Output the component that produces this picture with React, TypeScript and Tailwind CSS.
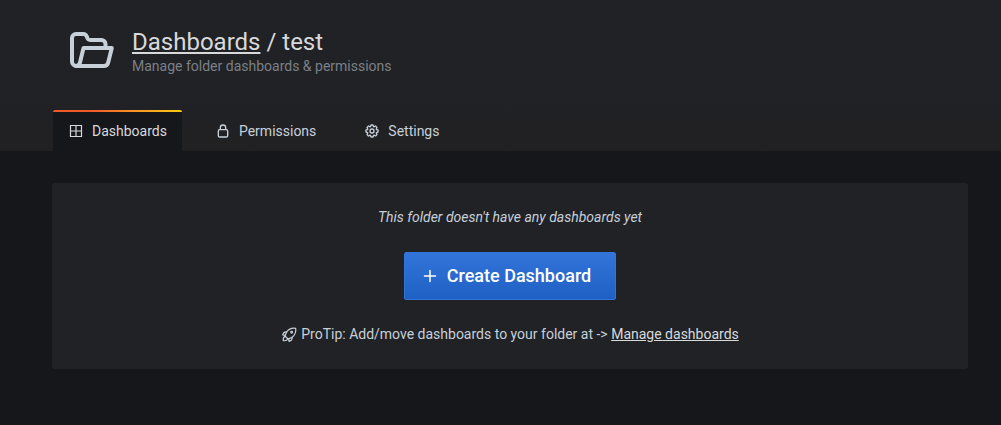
import type { ReactNode } from 'react';

function FolderOpenIcon() {
  return (
    <svg className="mb-1" width="44" height="36" viewBox="0 0 44 36" fill="none" stroke="currentColor" strokeWidth="4" strokeLinejoin="round" aria-hidden="true">
      <path d="M8 34H6.500a4.500 4.500 0 0 1-4.500-4.500V6a4 4 0 0 1 4-4h7a4 4 0 0 1 3.800 2.500l.8 2a2.500 2.500 0 0 0 2.300 1.500H31.500a4 4 0 0 1 4 4v4" />
      <path d="M13.500 16H41.800l-3.600 14.500a4.500 4.500 0 0 1-4.400 3.500H6a4.500 4.500 0 0 0 4-3.500Z" />
    </svg>
  );
}

function GridIcon() {
  return (
    <svg width="16" height="16" viewBox="0 0 16 16" fill="none" stroke="currentColor" strokeWidth="1.200" aria-hidden="true">
      <path d="M2.500 2.500h11v11h-11zM8 2.500v11M2.500 8h11" />
    </svg>
  );
}

function LockIcon() {
  return (
    <svg width="16" height="16" viewBox="0 0 24 24" fill="currentColor" aria-hidden="true">
      <path d="M17,9V7A5,5,0,0,0,7,7V9a3,3,0,0,0-3,3v7a3,3,0,0,0,3,3H17a3,3,0,0,0,3-3V12A3,3,0,0,0,17,9ZM9,7a3,3,0,0,1,6,0V9H9Zm9,12a1,1,0,0,1-1,1H7a1,1,0,0,1-1-1V12a1,1,0,0,1,1-1H17a1,1,0,0,1,1,1Z" />
    </svg>
  );
}

function CogIcon() {
  return (
    <svg width="16" height="16" viewBox="0 0 24 24" fill="currentColor" aria-hidden="true">
      <path d="M21.32,9.55l-1.89-.63.89-1.78A1,1,0,0,0,20.13,6L18,3.87a1,1,0,0,0-1.150-.19l-1.780.89-.63-1.890A1,1,0,0,0,13.500,2h-3a1,1,0,0,0-.95.68L8.920,4.570,7.140,3.680A1,1,0,0,0,6,3.870L3.870,6a1,1,0,0,0-.19,1.150l.89,1.780-1.890.63A1,1,0,0,0,2,10.500v3a1,1,0,0,0,.68.95l1.890.63-.89,1.780A1,1,0,0,0,3.870,18L6,20.130a1,1,0,0,0,1.150.19l1.780-.89.63,1.890a1,1,0,0,0,.95.68h3a1,1,0,0,0,.95-.68l.63-1.890,1.780.89A1,1,0,0,0,18,20.130L20.130,18a1,1,0,0,0,.19-1.150l-.89-1.780,1.890-.63A1,1,0,0,0,22,13.500v-3A1,1,0,0,0,21.320,9.550ZM20,12.780l-1.200.4A2,2,0,0,0,17.640,16l.57,1.140-1.100,1.100L16,17.640a2,2,0,0,0-2.790,1.160l-.4,1.200H11.220l-.4-1.200A2,2,0,0,0,8,17.640l-1.140.57-1.100-1.100L6.360,16A2,2,0,0,0,5.200,13.180L4,12.780V11.220l1.200-.4A2,2,0,0,0,6.360,8L5.790,6.890l1.100-1.100L8,6.360A2,2,0,0,0,10.820,5.200l.4-1.200h1.560l.4,1.200A2,2,0,0,0,16,6.360l1.140-.57,1.100,1.100L17.640,8a2,2,0,0,0,1.160,2.790l1.200.4ZM12,8a4,4,0,1,0,4,4A4,4,0,0,0,12,8Zm0,6a2,2,0,1,1,2-2A2,2,0,0,1,12,14Z" />
    </svg>
  );
}

function PlusIcon() {
  return (
    <svg width="18" height="18" viewBox="0 0 18 18" fill="none" stroke="currentColor" strokeWidth="1.500" strokeLinecap="round" aria-hidden="true">
      <path d="M9 3.500v11M3.500 9h11" />
    </svg>
  );
}

function RocketIcon() {
  return (
    <svg width="16" height="16" viewBox="0 0 24 24" fill="none" stroke="currentColor" strokeWidth="1.800" strokeLinejoin="round" strokeLinecap="round" aria-hidden="true">
      <path d="M22 2c-6-.8-10.500 1.200-13.500 5.500L6 13.500l4.500 4.500 6-2.500C20.800 12.500 22.800 8 22 2Z" />
      <path d="M8.500 7.500C5.500 7 3.500 8.700 2.500 12l4 .5M16.500 15.500c.5 3-1.200 5-4.500 6l-.5-3.700" />
      <path d="M6 14c-2.500 1-3 3-2.500 6.500 3.500.5 5.500 0 6.500-2.500" />
      <circle cx="16" cy="8" r="1.300" />
    </svg>
  );
}

function Tab({ icon, label, active = false }: { icon: ReactNode; label: string; active?: boolean }) {
  return (
    <li className={active ? 'overflow-hidden rounded-t-xs bg-[#16171b]' : ''}>
      <div className={active ? 'h-0.5 bg-linear-to-r from-[#f05a28] from-30% to-[#fbca0a] to-99%' : 'h-0.5'} />
      <a
        href="#"
        aria-current={active ? 'page' : undefined}
        className={`flex items-center gap-2 px-[15px] pt-[9px] pb-[9px] text-sm leading-[21px] ${active ? 'text-[#d8d9da]' : 'text-[#c7d0d9]'}`}
      >
        <span className="pb-0.5">{icon}</span>
        {label}
      </a>
    </li>
  );
}

export default function App() {
  return (
    <div className="min-h-screen bg-[#16171b] font-['Roboto',sans-serif] text-sm text-[#c7d0d9]">
      <header className="border-b border-[#212124] bg-linear-to-b from-[#202226] to-[#212124] pt-7 pr-[33px] pl-[53px]">
        <div className="flex items-center gap-[18px] pl-[17px]">
          <FolderOpenIcon />
          <div>
            <h1 className="text-2xl leading-7 text-[#d8d9da]">
              <a href="#" className="underline">Dashboards</a> / test
            </h1>
            <p className="leading-5 text-[#7b8087]">Manage folder dashboards &amp; permissions</p>
          </div>
        </div>
        <nav className="-mb-px pt-[34px]">
          <ul className="flex gap-[18px]">
            <Tab icon={<GridIcon />} label="Dashboards" active />
            <Tab icon={<LockIcon />} label="Permissions" />
            <Tab icon={<CogIcon />} label="Settings" />
          </ul>
        </nav>
      </header>
      <main className="pt-8 pr-[33px] pl-[52px]">
        <section className="flex flex-col items-center rounded-[3px] bg-[#202226] p-6 text-center">
          <p className="leading-5 italic">This folder doesn't have any dashboards yet</p>
          <button
            type="button"
            className="mt-[25px] flex h-12 items-center gap-2 rounded-xs border border-[#3274d9] bg-linear-to-b from-[#3274d9] to-[#1f60c4] pr-6 pl-4 text-lg font-medium text-white"
          >
            <PlusIcon />
            Create Dashboard
          </button>
          <p className="mt-6 flex items-center gap-1 leading-[21px]">
            <RocketIcon />
            <span>
              ProTip: Add/move dashboards to your folder at -&gt;{' '}
              <a href="#" className="text-[#d8d9da] underline">Manage dashboards</a>
            </span>
          </p>
        </section>
      </main>
    </div>
  );
}
